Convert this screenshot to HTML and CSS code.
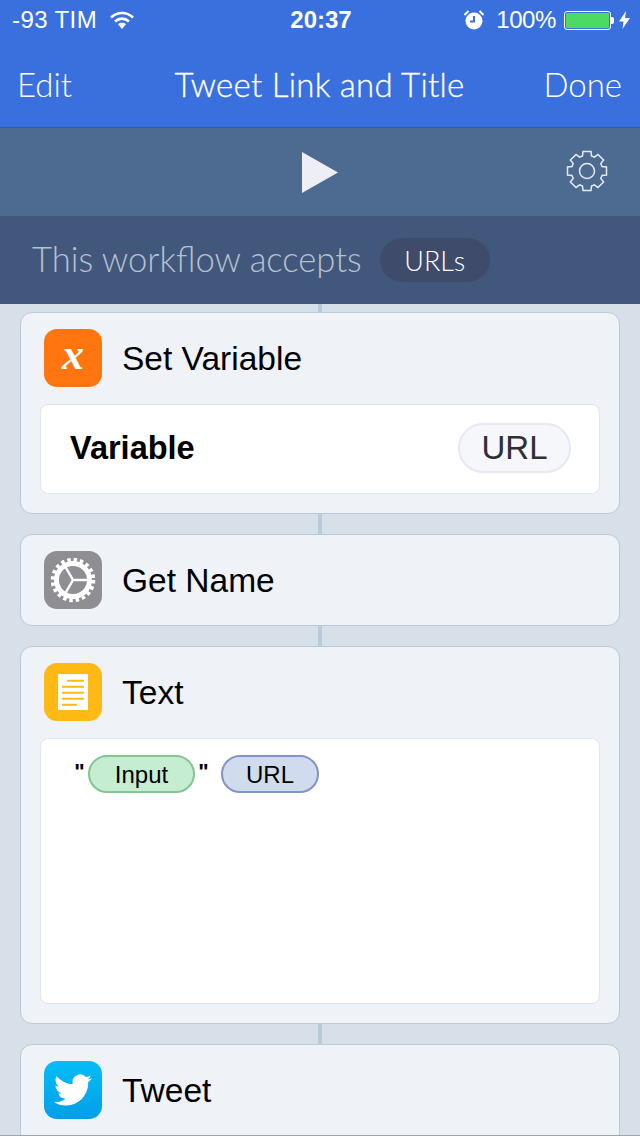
FILE: index.html
```html
<!DOCTYPE html>
<html lang="en">
<head>
<meta charset="utf-8">
<title>Tweet Link and Title</title>
<link rel="stylesheet" href="styles.css">
</head>
<body>
<div class="phone">
  <header class="top">
    <div class="status">
      <div class="status-left">
        <span class="carrier">-93 TIM</span>
        <svg class="wifi" viewBox="0 0 24 18"><path d="M1 6.500C7.500.500 16.500.500 23 6.500" /><path d="M5 10.500c4.200-3.800 9.800-3.800 14 0" /><path class="wifi-dot" d="M12 18l-4-4.800c2.300-1.900 5.700-1.900 8 0z" /></svg>
      </div>
      <div class="clock">20:37</div>
      <div class="status-right">
        <svg class="alarm" viewBox="0 0 20 20"><circle class="alarm-face" cx="10" cy="11" r="8.500" /><path class="alarm-hand" d="M10 6v5.500H6" /><path class="alarm-bell" d="M.500 5L4.500 1M19.500 5l-4-4" /></svg>
        <span class="percent">100%</span>
        <div class="battery"><div class="battery-fill"></div></div>
        <div class="battery-tip"></div>
        <svg class="bolt" viewBox="0 0 11 18"><path d="M7 0L0 10.500h4.500L3.500 18 11 7H6z" /></svg>
      </div>
    </div>
    <nav class="nav">
      <span>Edit</span>
      <span class="nav-title">Tweet Link and Title</span>
      <span class="nav-done">Done</span>
    </nav>
  </header>

  <section class="toolbar">
    <svg class="play" viewBox="0 0 36 41"><path d="M0 0l36 20.500L0 41z" /></svg>
    <svg class="gear" viewBox="-21 -21 42 42"><path d="M-4.500-15L-4-19.500H4L4.500-15 7.420-13.790 10.960-16.620 16.620-10.960 13.790-7.420 15-4.500 19.500-4V4L15 4.500 13.790 7.420 16.620 10.960 10.960 16.620 7.420 13.790 4.500 15 4 19.500H-4L-4.500 15-7.420 13.790-10.960 16.620-16.620 10.960-13.790 7.420-15 4.500-19.500 4V-4L-15-4.500-13.790-7.420-16.620-10.960-10.960-16.620-7.420-13.790Z" /><circle r="7.500" /></svg>
  </section>

  <section class="accepts">
    <span class="accepts-text">This workflow accepts</span>
    <span class="accepts-pill">URLs</span>
  </section>

  <main class="flow">
    <div class="link link-short"></div>
    <article class="card">
      <div class="card-head">
        <div class="icon icon-orange"><span class="icon-x">x</span></div>
        <h2 class="card-title">Set Variable</h2>
      </div>
      <div class="field field-row">
        <span class="field-label">Variable</span>
        <span class="value-pill">URL</span>
      </div>
    </article>
    <div class="link"></div>
    <article class="card">
      <div class="card-head">
        <div class="icon icon-gray">
          <svg class="icon-art" viewBox="-29 -29 58 58"><circle class="cog-teeth" r="20" /><circle class="cog-ring" r="16.500" /><path class="cog-spokes" d="M0 0H15M0 0L-7.500 13M0 0L-7.500-13" /></svg>
        </div>
        <h2 class="card-title">Get Name</h2>
      </div>
    </article>
    <div class="link"></div>
    <article class="card">
      <div class="card-head">
        <div class="icon icon-yellow">
          <svg class="icon-art" viewBox="0 0 58 58"><path class="page" d="M14 11h30v36H14z" /><path class="page-lines" d="M23 17.700h17M18 23.700h22M18 29.700h22M18 35.700h22M18 41.700h15" /></svg>
        </div>
        <h2 class="card-title">Text</h2>
      </div>
      <div class="field field-text">
        <span class="quote">"</span><span class="token token-green">Input</span><span class="quote">"</span>
        <span class="token token-blue">URL</span>
      </div>
    </article>
    <div class="link"></div>
    <article class="card card-last">
      <div class="card-head">
        <div class="icon icon-blue">
          <svg class="icon-art" viewBox="-6.300 -6.300 36.600 36.600"><path class="bird" d="M23.953 4.570a10 10 0 01-2.825.775 4.958 4.958 0 002.163-2.723c-.951.555-2.005.959-3.127 1.184a4.920 4.920 0 00-8.384 4.482C7.690 8.095 4.067 6.130 1.640 3.162a4.822 4.822 0 00-.666 2.475c0 1.710.870 3.213 2.188 4.096a4.904 4.904 0 01-2.228-.616v.060a4.923 4.923 0 003.946 4.827 4.996 4.996 0 01-2.212.085 4.936 4.936 0 004.604 3.417 9.867 9.867 0 01-6.102 2.105c-.390 0-.779-.023-1.170-.067a13.995 13.995 0 007.557 2.209c9.053 0 13.998-7.496 13.998-13.985 0-.210 0-.420-.015-.630A9.935 9.935 0 0024 4.590z" /></svg>
        </div>
        <h2 class="card-title">Tweet</h2>
      </div>
    </article>
  </main>
</div>
</body>
</html>
```
FILE: styles.css
```css
* { box-sizing: border-box; }
html, body { margin: 0; padding: 0; }
body { background: #d7dfe9; }
.phone {
  width: 640px;
  height: 1136px;
  overflow: hidden;
  display: flex;
  flex-direction: column;
  background: #d7dfe9;
  border-bottom: 1px solid #9da5ae;
  font-family: "Liberation Sans", Arial, sans-serif;
  color: #000;
}
.top {
  height: 128px;
  flex: none;
  background: #3a70de;
  color: #fff;
  border-bottom: 1px solid #3a5a92;
}
.status {
  height: 40px;
  display: grid;
  grid-template-columns: 1fr auto 1fr;
  align-items: center;
  padding: 0 10px 0 12px;
  font-size: 24px;
}
.status-left { display: flex; align-items: center; gap: 13px; }
.status-right { display: flex; align-items: center; justify-content: flex-end; }
.carrier { letter-spacing: .4px; }
.clock { font-weight: 700; font-size: 24px; }
.wifi { width: 24px; height: 18px; fill: none; stroke: #fff; stroke-width: 2.600; }
.wifi-dot { fill: #fff; stroke: none; }
.alarm { width: 20px; height: 20px; margin-right: 12px; }
.alarm-face { fill: #fff; }
.alarm-hand { fill: none; stroke: #3a70de; stroke-width: 2; }
.alarm-bell { fill: none; stroke: #fff; stroke-width: 2; }
.percent { margin-right: 8px; letter-spacing: -.4px; }
.battery {
  width: 47px;
  height: 19px;
  border: 1px solid #fff;
  border-radius: 3px;
  padding: 1px;
}
.battery-fill { height: 100%; background: #4cd964; border-radius: 1px; }
.battery-tip { width: 3px; height: 7px; background: #fff; border-radius: 0 2px 2px 0; margin: 0 5px 0 0; }
.bolt { width: 11px; height: 18px; fill: #fff; }
.nav {
  height: 87px;
  padding: 1px 18px 0 17px;
  display: grid;
  grid-template-columns: 1fr auto 1fr;
  align-items: center;
  font-family: Lato, sans-serif;
  font-weight: 300;
  font-size: 33px;
}
.nav-title { font-weight: 300; letter-spacing: .25px; -webkit-text-stroke: .3px #fff; }
.nav-done { justify-self: end; }
.toolbar {
  height: 88px;
  flex: none;
  background: #4d6a91;
  display: flex;
  align-items: center;
  justify-content: center;
  position: relative;
}
.play { width: 36px; height: 41px; fill: #eeeff4; margin-top: 1px; }
.gear {
  position: absolute;
  left: 565.500px;
  top: 22px;
  width: 42px;
  height: 42px;
  fill: none;
  stroke: #e6ebf2;
  stroke-width: 1.500;
}
.accepts {
  height: 88px;
  flex: none;
  background: #41587c;
  display: flex;
  align-items: center;
  padding: 0 32px;
  gap: 18px;
  font-family: Lato, sans-serif;
}
.accepts-text { font-size: 34.600px; font-weight: 300; color: #b6c1d0; margin-top: -3px; }
.accepts-pill {
  width: 110px;
  height: 44px;
  border-radius: 22px;
  background: #3f4b6b;
  color: #fff;
  font-size: 27px;
  font-weight: 300;
  display: flex;
  align-items: center;
  justify-content: center;
}
.flow { display: flex; flex-direction: column; padding: 0 20px; }
.link { width: 4px; height: 20px; background: #b9cad8; align-self: center; flex: none; }
.link-short { height: 8px; }
.card {
  flex: none;
  background: #eff3f8;
  border: 1px solid #b9c9d7;
  border-radius: 12px;
  padding: 16px 19px 16px 19px;
}
.card-last { height: 160px; }
.card-head { display: flex; align-items: center; height: 58px; padding-left: 4px; gap: 20px; }
.card-title { margin: 2px 0 0; font-size: 33.500px; font-weight: 400; }
.icon {
  width: 58px;
  height: 58px;
  flex: none;
  border-radius: 13px;
  display: flex;
  align-items: center;
  justify-content: center;
}
.icon-art { width: 58px; height: 58px; display: block; }
.icon-orange { background: #ff7610; }
.icon-gray { background: #8e8e93; }
.icon-yellow { background: #ffb914; }
.icon-blue { background: linear-gradient(#06bdf6, #019fe8); }
.icon-x {
  font-family: "Liberation Serif", serif;
  font-style: italic;
  font-weight: 700;
  font-size: 44px;
  line-height: 1;
  color: #fff;
  margin-top: -6px;
}
.cog-teeth { fill: none; stroke: #fff; stroke-width: 4.500; stroke-dasharray: 3.400 2.883; }
.cog-ring { fill: none; stroke: #fff; stroke-width: 5; }
.cog-spokes { fill: none; stroke: #fff; stroke-width: 2.500; }
.page { fill: #fff; }
.page-lines { fill: none; stroke: #ffb914; stroke-width: 2; }
.bird { fill: #fff; }
.field {
  background: #fff;
  border: 1px solid #e1e7ef;
  border-radius: 8px;
  margin: 17px 0 3px;
}
.field-row {
  height: 90px;
  display: flex;
  align-items: center;
  justify-content: space-between;
  padding: 0 28px 2px 29px;
}
.field-label { font-size: 32.500px; font-weight: 700; }
.value-pill {
  width: 113px;
  height: 50px;
  border-radius: 25px;
  border: 2px solid #e5e9f2;
  background: #f5f7fb;
  color: #2e3035;
  font-size: 33px;
  display: flex;
  align-items: center;
  justify-content: center;
}
.field-text {
  height: 266px;
  padding: 16px 0 0 30px;
  display: flex;
  align-items: flex-start;
  font-size: 24px;
}
.quote { line-height: 38px; width: 17px; text-align: center; margin-top: -2px; font-weight: 700; font-size: 22px; }
.token {
  height: 38px;
  border-radius: 19px;
  border: 2px solid;
  padding-top: 1px;
  display: flex;
  align-items: center;
  justify-content: center;
}
.token-green { width: 107px; background: #c5edd2; border-color: #85c58f; }
.token-blue { width: 98px; background: #d0dcee; border-color: #8492c8; margin-left: 9px; }
```
